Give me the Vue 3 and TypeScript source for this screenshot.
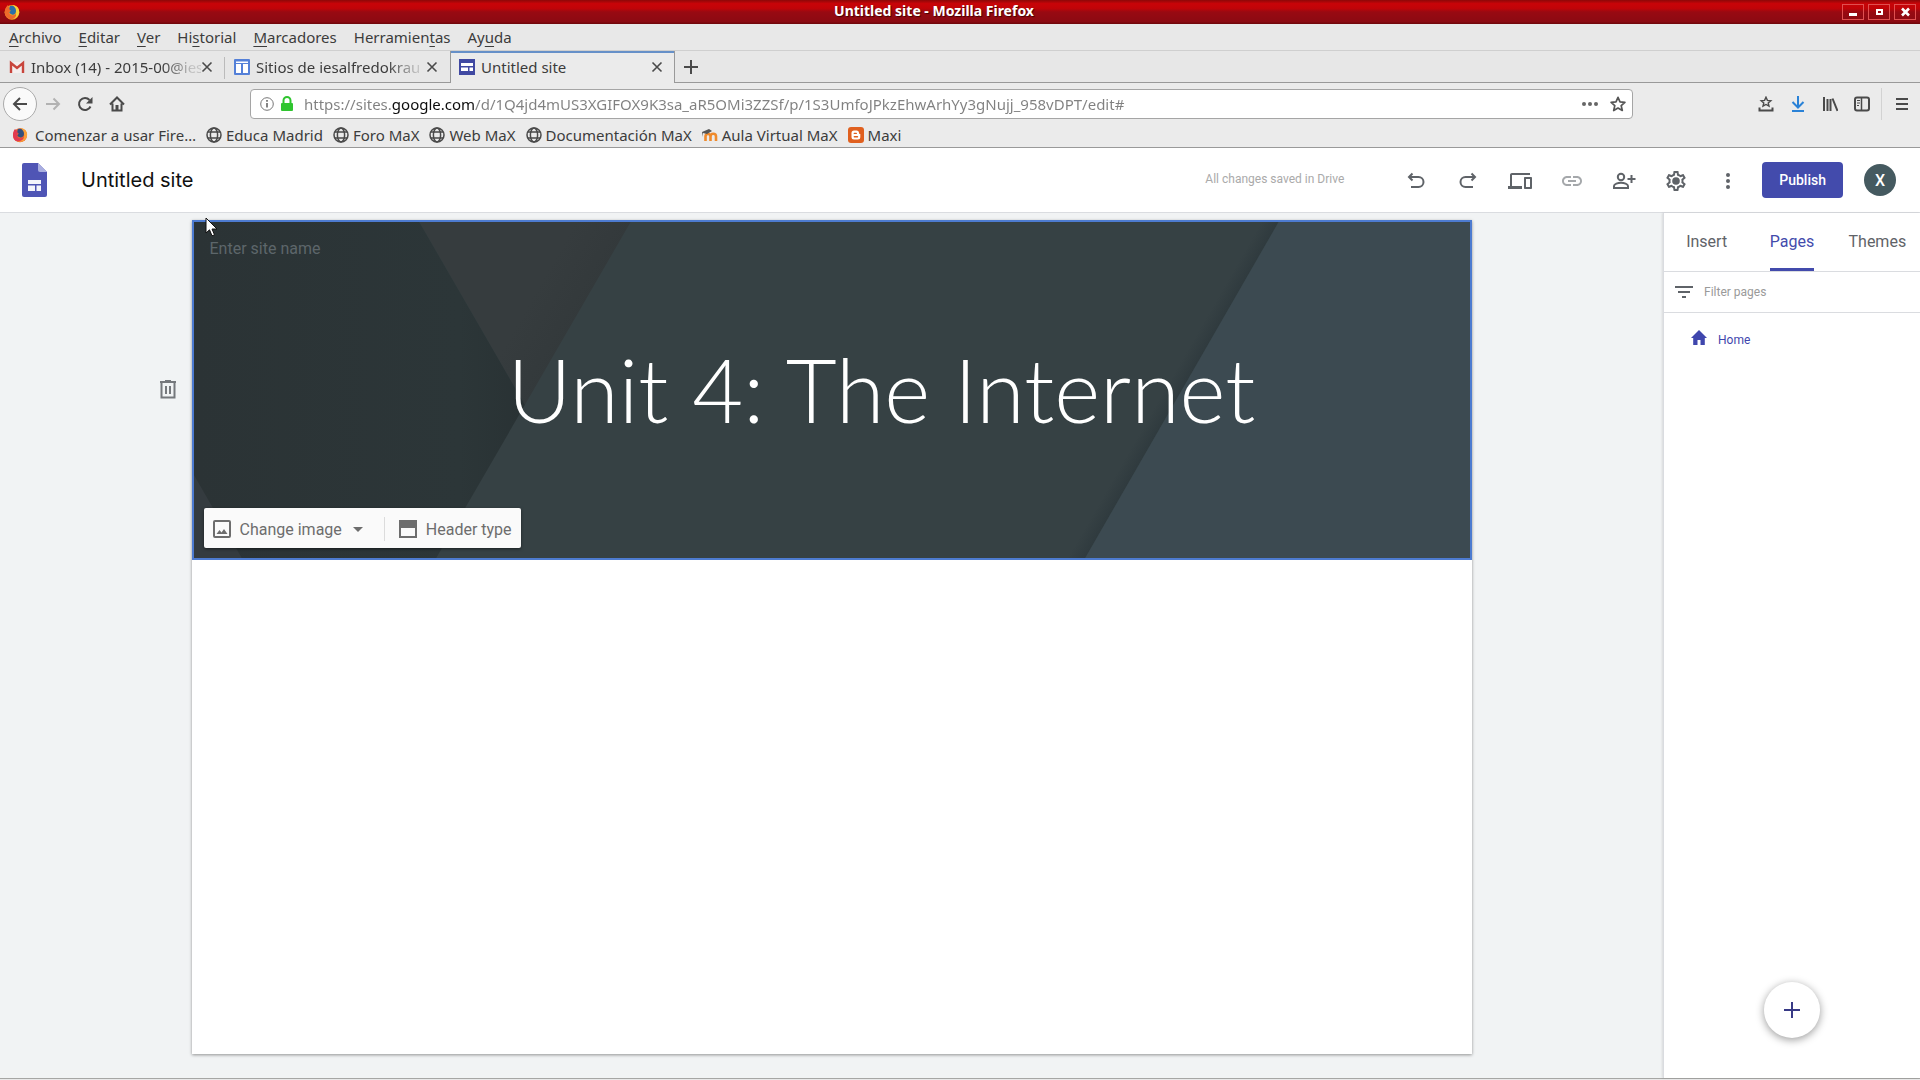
<script setup lang="ts">
import { ref } from 'vue'

interface MenuEntry { before: string; key: string; after: string }
interface Bookmark { label: string; icon: 'firefox' | 'globe' | 'moodle' | 'blogger' }

const menus: MenuEntry[] = [
  { before: '', key: 'A', after: 'rchivo' },
  { before: '', key: 'E', after: 'ditar' },
  { before: '', key: 'V', after: 'er' },
  { before: 'Hi', key: 's', after: 'torial' },
  { before: '', key: 'M', after: 'arcadores' },
  { before: 'Herramien', key: 't', after: 'as' },
  { before: 'Ay', key: 'u', after: 'da' },
]

const bookmarks: Bookmark[] = [
  { label: 'Comenzar a usar Fire…', icon: 'firefox' },
  { label: 'Educa Madrid', icon: 'globe' },
  { label: 'Foro MaX', icon: 'globe' },
  { label: 'Web MaX', icon: 'globe' },
  { label: 'Documentación MaX', icon: 'globe' },
  { label: 'Aula Virtual MaX', icon: 'moodle' },
  { label: 'Maxi', icon: 'blogger' },
]

const panels = ['Insert', 'Pages', 'Themes']
const activePanel = ref('Pages')
const address = ref('https://sites.google.com/d/1Q4jd4mUS3XGIFOX9K3sa_aR5OMi3ZZSf/p/1S3UmfoJPkzEhwArhYy3gNujj_958vDPT/edit#')
const siteTitle = ref('Untitled site')
const siteName = ref('')
const pageFilter = ref('')
</script>

<template>
  <div class="window">
    <header class="titlebar">
      <svg class="i16 title-logo" viewBox="0 0 16 16" aria-hidden="true">
        <circle cx="8" cy="8.300" r="7.400" fill="#f5a21c" />
        <path d="M8 1c5 0 8 4 7 8-1 5-6 7-10 5 5 0 8-3 7-7C11 4 10 3 8 1z" fill="#f9d13a" />
        <path d="M1 6C2 3 3 2 4 1c0 2 2 3 3 4L5 9c1 3 5 3 7 1 1 3-3 6-6 5C2 14 0 10 1 6z" fill="#ee6a2b" />
        <path d="M6 2c3-1 6 1 6 5 0 3-3 5-5 3C4 9 6 7 7 7 5 6 5 4 6 2z" fill="#2c6fa8" />
      </svg>
      <span class="window-title">Untitled site - Mozilla Firefox</span>
      <div class="window-buttons">
        <button aria-label="Minimizar"><svg viewBox="0 0 20 14"><path d="M6 9.500h8" stroke="#fff" stroke-width="3" /></svg></button>
        <button aria-label="Maximizar"><svg viewBox="0 0 20 14"><rect x="8" y="5" width="5" height="4" fill="none" stroke="#fff" stroke-width="2" /></svg></button>
        <button aria-label="Cerrar"><svg viewBox="0 0 20 14"><path d="M7 3.500l7 7m0-7l-7 7" stroke="#fff" stroke-width="2.600" /></svg></button>
      </div>
    </header>

    <nav class="menubar" aria-label="Menú">
      <button v-for="m in menus" :key="m.key"><span>{{ m.before }}<u>{{ m.key }}</u>{{ m.after }}</span></button>
    </nav>

    <div class="tabstrip" role="tablist">
      <div class="tab">
        <svg class="i16" viewBox="0 0 16 16" aria-hidden="true">
          <rect x="1" y="3" width="14" height="11" fill="#f4eeee" />
          <path d="M2 14V4l6 5 6-5v10" fill="none" stroke="#c8453c" stroke-width="2.400" />
        </svg>
        <button class="tab-label fade" role="tab">Inbox (14) - 2015-00@ies</button>
        <button class="close" aria-label="Cerrar pestaña"><svg viewBox="0 0 12 12"><path d="M1.500 1.500l9 9m0-9l-9 9" /></svg></button>
      </div>
      <div class="tab split">
        <svg class="i16" viewBox="0 0 16 16" aria-hidden="true">
          <rect width="16" height="16" rx="1" fill="#5480d8" />
          <path d="M2 5h5v9H2zM9 5h5v9H9zM2 2.500h12V4H2z" fill="#fff" />
        </svg>
        <button class="tab-label fade" role="tab">Sitios de iesalfredokrau</button>
        <button class="close" aria-label="Cerrar pestaña"><svg viewBox="0 0 12 12"><path d="M1.500 1.500l9 9m0-9l-9 9" /></svg></button>
      </div>
      <div class="tab active">
        <svg class="i16" viewBox="0 0 16 16" aria-hidden="true">
          <rect width="16" height="16" fill="#4049a2" />
          <path d="M2 4h12v3H2zM2 8.500h7V12H2zM10.500 8.500H14V12h-3.500z" fill="#fff" />
        </svg>
        <button class="tab-label" role="tab" aria-selected="true">Untitled site</button>
        <button class="close" aria-label="Cerrar pestaña"><svg viewBox="0 0 12 12"><path d="M1.500 1.500l9 9m0-9l-9 9" /></svg></button>
      </div>
      <button class="new-tab" aria-label="Nueva pestaña"><svg viewBox="0 0 16 16"><path d="M8 1v14M1 8h14" /></svg></button>
    </div>

    <div class="navbar">
      <div class="nav-buttons">
        <button class="back" aria-label="Atrás"><svg class="i16 line" viewBox="0 0 16 16"><path d="M15 8H2M8 2L2 8l6 6" /></svg></button>
        <button class="dim" aria-label="Adelante"><svg class="i16 line" viewBox="0 0 16 16"><path d="M1 8h13M8.500 2.500L14 8l-5.500 5.500" /></svg></button>
        <button aria-label="Recargar"><svg class="i16 line" viewBox="0 0 16 16"><path d="M13.500 10.500A6 6 0 1 1 12.500 4" /><path d="M15.500 1v6.500H9z" fill="#4a4a4a" stroke="none" /></svg></button>
        <button aria-label="Inicio"><svg class="i16 line" viewBox="0 0 16 16"><path d="M1 8.500L8 1.500l7 7M3.500 7.500V14.500h9V7.500" /><path d="M6.500 9h3v5h-3z" fill="#4a4a4a" stroke="none" /></svg></button>
      </div>
      <div class="urlbar">
        <svg class="info" viewBox="0 0 14 14" aria-hidden="true"><circle cx="7" cy="7" r="6.300" fill="none" stroke="#777" /><path d="M7 6v4.500M7 3v1.700" stroke="#666" stroke-width="1.600" /></svg>
        <svg class="lock" viewBox="0 0 14 16" aria-hidden="true"><path d="M3.500 8V4.500a3.500 3.500 0 0 1 7 0V8" fill="none" stroke="#2fc52f" stroke-width="2" /><rect x="1" y="7" width="12" height="8" rx="1" fill="#2fc52f" /></svg>
        <input v-model="address" class="address" type="text" aria-label="Dirección" spellcheck="false">
        <button aria-label="Acciones de página"><svg class="i16" viewBox="0 0 16 16" fill="#666"><circle cx="2" cy="8" r="2" /><circle cx="8" cy="8" r="2" /><circle cx="14" cy="8" r="2" /></svg></button>
        <button aria-label="Añadir marcador"><svg class="i16" viewBox="0 0 16 16"><path d="M8 1.300l2 4.500 4.900.5-3.700 3.300 1.100 4.900L8 12l-4.300 2.500 1.100-4.900L1.100 6.300 6 5.800z" fill="none" stroke="#555" stroke-width="1.700" stroke-linejoin="round" /></svg></button>
      </div>
      <div class="nav-tools">
        <button aria-label="Mostrar marcadores"><svg class="i16" viewBox="0 0 16 16" fill="none" stroke="#4a4a4a"><path d="M8 1.200l1.400 3.200 3.400.3-2.600 2.200.8 3.300L8 8.500l-3 1.700.8-3.300-2.600-2.200 3.400-.3z" stroke-width="1.400" /><path d="M1.500 11.500v3h13v-3" stroke-width="2" /></svg></button>
        <button aria-label="Descargas"><svg class="i16" viewBox="0 0 16 16" fill="none" stroke="#2a82d7" stroke-width="2"><path d="M8 0v11M2.500 6L8 11.500 13.500 6M2 15h12" /></svg></button>
        <button aria-label="Catálogo"><svg class="i16" viewBox="0 0 16 16" fill="none" stroke="#4a4a4a" stroke-width="2"><path d="M2 1v14M5.500 3v12M8.500 3v12M10.500 2.500L15.500 15" /></svg></button>
        <button aria-label="Barra lateral"><svg class="i16" viewBox="0 0 16 16" fill="none" stroke="#4a4a4a"><rect x="1" y="1.500" width="14" height="13" rx="2" stroke-width="2" /><path d="M7.500 2v12" stroke-width="1.500" /><path d="M3 4.500h3M3 7h3M3 9.500h2" /></svg></button>
        <button class="app-menu" aria-label="Abrir menú"><svg class="i16" viewBox="0 0 16 16"><path d="M2 3h12M2 8h12M2 13h12" stroke="#4a4a4a" stroke-width="2" /></svg></button>
      </div>
    </div>

    <nav class="bookmarks" aria-label="Marcadores">
      <a v-for="b in bookmarks" :key="b.label" href="#" :class="b.icon">
        <svg v-if="b.icon === 'globe'" class="i16" viewBox="0 0 16 16" fill="none" stroke="#4a4a4a" stroke-width="1.500" aria-hidden="true"><circle cx="8" cy="8" r="7" /><ellipse cx="8" cy="8" rx="3.600" ry="7" /><path d="M2 5h12M2 11h12" /></svg>
        <svg v-else-if="b.icon === 'firefox'" class="i16" viewBox="0 0 16 16" aria-hidden="true"><circle cx="8" cy="8.300" r="7" fill="#f0652b" /><path d="M8 1c5 0 8 4 7 8-1 5-6 7-10 5 5 0 8-3 7-7C11 4 10 3 8 1z" fill="#f9a13a" /><path d="M1 8c0-3 1-5 2-6l3 3-1 4c1 3 5 3 7 1-1 4-5 5-8 4-2-1-3-3-3-6z" fill="#e23a50" /><path d="M6 2c3-1 6 1 6 5 0 3-3 4-5 3-3-1-1-3 0-3-2-1-2-3-1-5z" fill="#33507e" /></svg>
        <svg v-else-if="b.icon === 'moodle'" class="i16" viewBox="0 0 16 16" aria-hidden="true"><path d="M3.500 14V9.500a2.500 2.500 0 0 1 5 0V14M8.500 9.500a2.500 2.500 0 0 1 5.500 0V14" fill="none" stroke="#ef8a2c" stroke-width="2.600" /><path d="M0 5l7-3 3 2-5 3-4-1v4z" fill="#555" /></svg>
        <svg v-else class="i16" viewBox="0 0 16 16" aria-hidden="true"><rect width="16" height="16" rx="3" fill="#e0601f" /><path d="M6 3.500h2.500a2.500 2.500 0 0 1 2.500 2.500c0 .7.500 1 1.300 1V10a2.500 2.500 0 0 1-2.500 2.500H6A2.500 2.500 0 0 1 3.500 10V6A2.500 2.500 0 0 1 6 3.500z" fill="#fff" /><path d="M6.300 6.400h2M6.300 9.700h3.200" stroke="#e0601f" stroke-width="1.400" stroke-linecap="round" /></svg>
        <span>{{ b.label }}</span>
      </a>
    </nav>

    <header class="appbar">
      <svg class="sites-logo" viewBox="0 0 25 34" aria-hidden="true">
        <path d="M2 0h14l9 9v23a2 2 0 0 1-2 2H2a2 2 0 0 1-2-2V2a2 2 0 0 1 2-2z" fill="#4f55b5" />
        <path d="M16 0l9 9h-7a2 2 0 0 1-2-2z" fill="#a9aee0" />
        <path d="M6 17h13v4H6zM6 22.500h7V28H6zM14.500 22.500H19V28h-4.500z" fill="#f4f4fb" />
      </svg>
      <input v-model="siteTitle" class="site-title" type="text" aria-label="Site document name">
      <span class="save-state">All changes saved in Drive</span>
      <div class="actions">
        <button aria-label="Undo"><svg class="i24" viewBox="0 0 24 24" fill="none" stroke="#5f6368" stroke-width="2"><path d="M8.500 4.500L5 8l3.500 3.500M5 8h9.500a4.500 4.500 0 0 1 0 10H7" /></svg></button>
        <button aria-label="Redo"><svg class="i24" viewBox="0 0 24 24" fill="none" stroke="#5f6368" stroke-width="2"><path d="M15.500 4.500L19 8l-3.500 3.500M19 8H9.500a4.500 4.500 0 0 0 0 10H17" /></svg></button>
        <button aria-label="Preview"><svg class="i24" viewBox="0 0 24 24" fill="#5f6368"><path d="M4 6h18V4H4c-1.100 0-2 .9-2 2v11H0v3h14v-3H4V6zm19 2h-6c-.55 0-1 .45-1 1v10c0 .55.450 1 1 1h6c.55 0 1-.45 1-1V9c0-.55-.45-1-1-1zm-1 10h-4v-8h4v8z" /></svg></button>
        <button aria-label="Copy published site link"><svg class="i24" viewBox="0 0 24 24" fill="#a5a8ab"><path d="M3.900 12c0-1.710 1.390-3.100 3.100-3.100h4V7H7c-2.760 0-5 2.240-5 5s2.240 5 5 5h4v-1.900H7c-1.710 0-3.100-1.390-3.100-3.100zM8 13h8v-2H8v2zm9-6h-4v1.900h4c1.710 0 3.100 1.390 3.100 3.100s-1.390 3.100-3.100 3.100h-4V17h4c2.760 0 5-2.240 5-5s-2.240-5-5-5z" /></svg></button>
        <button aria-label="Share with others"><svg class="i24" viewBox="0 0 24 24" fill="none" stroke="#5f6368" stroke-width="2"><circle cx="9" cy="8" r="3.200" /><path d="M2 19v-2c0-2 4-3.300 7-3.300s7 1.300 7 3.300v2zM19.500 6v8M15.500 10h8" /></svg></button>
        <button aria-label="Settings"><svg class="i24" viewBox="0 0 24 24" fill="#5f6368"><path d="M19.430 12.980c.04-.32.070-.64.070-.98s-.03-.66-.07-.98l2.110-1.650c.19-.15.240-.42.120-.64l-2-3.460c-.09-.16-.26-.25-.44-.25-.06 0-.12.010-.17.030l-2.490 1c-.52-.4-1.080-.73-1.690-.98l-.38-2.650C14.460 2.180 14.250 2 14 2h-4c-.25 0-.46.180-.49.420l-.38 2.650c-.61.250-1.170.590-1.690.980l-2.490-1c-.06-.02-.12-.03-.18-.03-.17 0-.34.090-.43.250l-2 3.460c-.13.220-.07.490.120.640l2.110 1.650c-.04.320-.07.650-.07.980s.03.660.070.980l-2.110 1.650c-.19.150-.24.420-.12.640l2 3.460c.09.160.260.250.440.250.06 0 .12-.01.170-.03l2.490-1c.52.400 1.080.730 1.690.980l.38 2.650c.03.240.240.420.490.420h4c.25 0 .46-.18.490-.42l.38-2.650c.61-.25 1.170-.59 1.690-.98l2.490 1c.06.020.120.030.180.030.17 0 .34-.09.430-.25l2-3.460c.12-.22.070-.49-.12-.64l-2.110-1.650zm-1.980-1.710c.04.310.050.520.050.730s-.02.430-.05.730l-.14 1.130.89.700 1.080.840-.7 1.210-1.270-.51-1.040-.42-.9.680c-.43.320-.84.560-1.250.730l-1.060.430-.16 1.130-.2 1.350h-1.400l-.19-1.350-.16-1.130-1.060-.43c-.43-.18-.83-.41-1.230-.71l-.91-.7-1.060.430-1.270.510-.7-1.210 1.080-.84.890-.7-.14-1.130c-.03-.31-.05-.54-.05-.74s.02-.43.050-.73l.14-1.130-.89-.7-1.080-.84.7-1.210 1.270.510 1.040.420.900-.68c.43-.32.840-.56 1.250-.73l1.060-.43.160-1.130.2-1.350h1.390l.19 1.350.16 1.130 1.060.430c.43.180.830.410 1.230.710l.91.700 1.060-.43 1.270-.51.700 1.210-1.070.850-.89.700.14 1.130z" /><circle cx="12" cy="12" r="3.800" /></svg></button>
        <button aria-label="More"><svg class="i24" viewBox="0 0 24 24" fill="#5f6368"><circle cx="12" cy="6" r="2" /><circle cx="12" cy="12" r="2" /><circle cx="12" cy="18" r="2" /></svg></button>
      </div>
      <button class="publish">Publish</button>
      <button class="avatar" aria-label="Account">X</button>
    </header>

    <div class="workspace">
      <main class="stage">
        <button class="trash" aria-label="Delete section"><svg class="i24" viewBox="0 0 24 24" fill="none" stroke="#75787c" stroke-width="2"><path d="M5.500 5v14.500h13V5M4 4h16M9 3h6M10 8v8M14 8v8" /></svg></button>
        <article class="page">
          <section class="hero">
            <svg class="backdrop" viewBox="0 0 1280 340" preserveAspectRatio="none" aria-hidden="true">
              <defs>
                <linearGradient id="edge" gradientUnits="userSpaceOnUse" x1="977" y1="164" x2="991" y2="172"><stop offset="0" stop-color="#364144" /><stop offset="1" stop-color="#2f3a3e" /></linearGradient>
                <linearGradient id="wedge" gradientUnits="userSpaceOnUse" x1="340" y1="75" x2="388" y2="102"><stop offset="0" stop-color="#363c3e" /><stop offset="1" stop-color="#33393b" /></linearGradient>
                <linearGradient id="dark" x1="0" y1="0" x2="1" y2="0"><stop offset="0" stop-color="#2b3335" /><stop offset=".8" stop-color="#2c3638" /><stop offset="1" stop-color="#293234" /></linearGradient>
              </defs>
              <rect width="1280" height="340" fill="#364144" />
              <path d="M1020 0h68L894 340h-68z" fill="url(#edge)" />
              <path d="M1088 0h192v340H894z" fill="#3c4a51" />
              <path d="M226 0h212L332 185z" fill="url(#wedge)" />
              <path d="M0 0h226l106 185-89 155H0z" fill="url(#dark)" />
              <path d="M0 256l48 84H0z" fill="#343b3f" />
            </svg>
            <input v-model="siteName" class="site-name" type="text" placeholder="Enter site name" aria-label="Enter site name">
            <h1>Unit 4: The Internet</h1>
            <div class="hero-tools">
              <button>
                <svg class="i24" viewBox="0 0 24 24" fill="none" stroke="#6d6d6d" stroke-width="2"><rect x="4" y="4" width="16" height="16" rx="1" /><path d="M6.500 17l3-4 2 2.500 2.500-3.500 3.500 5z" fill="#6d6d6d" stroke="none" /></svg>
                <span>Change image</span>
                <svg class="caret" viewBox="0 0 10 5"><path d="M0 0h10L5 5z" fill="#6d6d6d" /></svg>
              </button>
              <button class="header-type">
                <svg class="i24" viewBox="0 0 24 24" fill="none" stroke="#6d6d6d" stroke-width="2"><path d="M4 4h16v16H4z" /><path d="M4 4h16v6H4z" fill="#6d6d6d" /></svg>
                <span>Header type</span>
              </button>
            </div>
          </section>
        </article>
        <svg class="pointer" viewBox="0 0 14 20" aria-hidden="true"><path d="M1 1v15l3.500-3.200 2.500 6 2.500-1-2.500-5.800h5z" fill="#fff" stroke="#111" /></svg>
      </main>

      <aside class="sidebar">
        <div class="panel-tabs" role="tablist">
          <button v-for="p in panels" :key="p" role="tab" :aria-selected="p === activePanel" :class="{ on: p === activePanel }" @click="activePanel = p"><span>{{ p }}</span></button>
        </div>
        <label class="filter">
          <svg class="i24" viewBox="0 0 24 24" aria-hidden="true"><path d="M3 7h18M6 12h12M10 17h4" stroke="#5f6368" stroke-width="2" /></svg>
          <input v-model="pageFilter" type="text" placeholder="Filter pages" aria-label="Filter pages">
        </label>
        <a class="page-link" href="#">
          <svg class="i16" viewBox="0 0 16 16" aria-hidden="true"><path d="M8 0l8 8h-2.200v7H9.500v-5h-3v5H2.200V8H0z" fill="#3f46ad" /></svg>
          <span>Home</span>
        </a>
        <button class="fab" aria-label="New page"><svg class="i16" viewBox="0 0 16 16"><path d="M8 0v16M0 8h16" stroke="#383a86" stroke-width="2" /></svg></button>
      </aside>
    </div>
  </div>
</template>

<style>
body {
  margin: 0;
}
</style>

<style scoped>
.window {
  min-height: 100vh;
  box-sizing: border-box;
  display: flex;
  flex-direction: column;
  padding-bottom: 1px;
  background: #e8e8e8;
  font-family: "Noto Sans", "Open Sans", sans-serif;
  font-size: 15px;
  color: #3c3c3c;
}

button,
input {
  border: 0;
  padding: 0;
  margin: 0;
  background: none;
  font: inherit;
  color: inherit;
  min-width: 0;
  outline: none;
}

button {
  display: flex;
  align-items: center;
  white-space: nowrap;
}

a {
  color: inherit;
  text-decoration: none;
}

svg {
  display: block;
  flex: none;
}

.i16 {
  width: 16px;
  height: 16px;
}

.i24 {
  width: 24px;
  height: 24px;
}

.line {
  fill: none;
  stroke: #4a4a4a;
  stroke-width: 2;
}

/* Browser chrome */
.titlebar {
  display: grid;
  grid-template-columns: 76px 1fr 76px;
  align-items: center;
  height: 24px;
  padding: 0 2px 0 4px;
  background: linear-gradient(#8c0808, #c80408 15%, #c00408 35%, #980a12 50%, #8c0a12 90%, #6c060a);
  box-sizing: border-box;
}

.window-title {
  justify-self: center;
  color: #fff;
  font-size: 14px;
  line-height: 20px;
  font-weight: 700;
  text-shadow: 1px 1px 1px #400;
  padding: 0 54px 2px 0;
}

.window-buttons {
  display: flex;
  gap: 4px;
}

.window-buttons button {
  width: 22px;
  height: 16px;
  box-sizing: border-box;
  border: 1px solid #e05050;
}

.window-buttons svg {
  width: 20px;
  height: 14px;
}

.menubar {
  display: flex;
  gap: 17px;
  height: 26px;
  padding: 0 9px;
  border-bottom: 1px solid #cfcfcf;
  background: #e8e8e8;
}

u {
  text-underline-offset: 3px;
}

.tabstrip {
  display: flex;
  height: 32px;
  background: #e7e7e7;
  box-shadow: inset 0 -1px #999;
}

.tab {
  display: flex;
  align-items: center;
  box-sizing: border-box;
  width: 225px;
  padding: 0 12px 0 9px;
}

.split {
  box-shadow: -1px 0 #bbb;
  clip-path: inset(6px 0 4px -1px);
}

.active {
  background: #ebebeb;
  border: solid #999;
  border-width: 0 1px;
  padding: 0 11px 0 8px;
  box-shadow: inset 0 2px #6690c8;
}

.tab-label {
  flex: 1;
  padding-left: 6px;
}

.fade {
  -webkit-mask-image: linear-gradient(90deg, #000 78%, rgba(0, 0, 0, .2) 95%);
  mask-image: linear-gradient(90deg, #000 78%, rgba(0, 0, 0, .2) 95%);
}

.close svg {
  width: 12px;
  height: 12px;
  fill: none;
  stroke: #4a4a4a;
  stroke-width: 1.600;
}

.new-tab {
  padding: 0 8px;
}

.new-tab svg {
  width: 16px;
  height: 16px;
  stroke: #4a4a4a;
  stroke-width: 2;
}

.navbar {
  display: flex;
  align-items: center;
  height: 41px;
  padding-top: 1px;
  box-sizing: border-box;
  background: #ebebeb;
}

.nav-buttons {
  display: flex;
  align-items: center;
  width: 250px;
  padding-left: 3px;
  box-sizing: border-box;
}

.nav-buttons button {
  justify-content: center;
  width: 32px;
  height: 34px;
}

.nav-buttons .back {
  width: 34px;
  border-radius: 50%;
  border: 1px solid #aaa;
  background: #fafafa;
  box-sizing: border-box;
}

.dim {
  opacity: .35;
}

.urlbar {
  display: flex;
  align-items: center;
  flex: 1;
  height: 30px;
  box-sizing: border-box;
  padding: 0 6px 0 9px;
  gap: 12px;
  border: 1px solid #a5a5a5;
  border-radius: 4px;
  background: #fff;
}

.info {
  width: 14px;
  height: 14px;
}

.lock {
  width: 14px;
  height: 16px;
  margin: 0 -2px 0 -6px;
}

.address {
  flex: 1;
  background: linear-gradient(90deg, #808080 88px, #0c0c0c 88px 170px, #808080 170px);
  -webkit-background-clip: text;
  background-clip: text;
  color: #808080;
  -webkit-text-fill-color: transparent;
}

.nav-tools {
  display: flex;
  align-items: center;
  justify-content: flex-end;
  gap: 16px;
  width: 287px;
  padding-right: 10px;
  box-sizing: border-box;
}

.app-menu {
  height: 32px;
  padding-left: 12px;
  margin-left: -5px;
  border-left: 1px solid #d2d2d2;
}

.bookmarks {
  display: flex;
  gap: 10px;
  height: 23px;
  padding: 0 12px;
  border-bottom: 1px solid #999;
  background: #ebebeb;
  line-height: 20px;
}

.bookmarks a {
  display: flex;
  align-items: center;
  gap: 4px;
  padding-bottom: 1px;
  white-space: nowrap;
}

.bookmarks .firefox {
  gap: 7px;
}

/* Sites editor */
.appbar {
  display: flex;
  align-items: center;
  height: 64px;
  padding: 0 24px 0 22px;
  border-bottom: 1px solid #dadce0;
  background: #fff;
  font-family: Roboto, sans-serif;
  color: #5f6368;
}

.sites-logo {
  width: 25px;
  height: 34px;
}

.site-title {
  flex: 1;
  padding-left: 34px;
  color: #111;
  font-family: Inter, Roboto, sans-serif;
  font-size: 20px;
}

.save-state {
  margin-right: 60px;
  padding-bottom: 2px;
  color: #aaa;
  font-size: 12px;
}

.actions {
  display: flex;
  gap: 28px;
  margin-right: 22px;
  padding-top: 2px;
}

.publish {
  height: 36px;
  padding: 0 17px;
  border-radius: 4px;
  background: #434bac;
  color: #fff;
  font-size: 14px;
  font-weight: 500;
}

.avatar {
  justify-content: center;
  width: 32px;
  height: 32px;
  margin-left: 21px;
  border-radius: 50%;
  background: #455a60;
  color: #fff;
  font-size: 16px;
  font-weight: 500;
}

.workspace {
  flex: 1;
  display: flex;
  border-bottom: 1px solid #a6a6a4;
  font-family: Roboto, sans-serif;
}

.stage {
  position: relative;
  flex: 1;
  display: grid;
  grid-template-columns: minmax(40px, 1fr) minmax(0, 1280px) minmax(40px, 1fr);
  padding: 7px 0 24px;
  background: #f1f3f4;
}

.trash {
  justify-self: end;
  align-self: start;
  height: 340px;
  padding-right: 12px;
}

.page {
  background: #fff;
  box-shadow: 0 1px 3px rgba(0, 0, 0, .4);
}

.hero {
  position: relative;
  display: flex;
  flex-direction: column;
  align-items: flex-start;
  justify-content: space-between;
  min-height: 340px;
  box-sizing: border-box;
  padding: 14px 10px 10px;
  border: 2px solid #4d7bd0;
}

.backdrop {
  position: absolute;
  inset: 0;
  width: 100%;
  height: 100%;
}

.site-name,
h1,
.hero-tools {
  position: relative;
}

.site-name {
  height: 24px;
  padding-left: 6px;
  color: #5d666a;
  font-size: 16px;
}

.site-name::placeholder {
  color: #5d666a;
  opacity: 1;
}

h1 {
  align-self: stretch;
  margin: 0;
  padding: 10px 0 0 100px;
  text-align: center;
  color: #fff;
  font-family: Lato, sans-serif;
  font-size: 88px;
  font-weight: 300;
  line-height: 104px;
}

.hero-tools {
  display: flex;
  align-items: center;
  height: 40px;
  padding: 2px 9px 0 6px;
  box-sizing: border-box;
  border-radius: 2px;
  background: #fafafa;
  color: #6d6d6d;
  font-size: 16px;
  box-shadow: 0 1px 3px rgba(0, 0, 0, .5);
}

.hero-tools button {
  gap: 6px;
}

.caret {
  width: 10px;
  height: 5px;
  margin: 0 21px 0 5px;
}

.hero-tools .header-type {
  height: 24px;
  padding-left: 11px;
  border-left: 1px solid #dcdcdc;
}

.pointer {
  position: absolute;
  left: 205px;
  top: 4px;
  width: 14px;
  height: 20px;
}

.sidebar {
  display: flex;
  flex-direction: column;
  width: 257px;
  box-sizing: border-box;
  border-left: 1px solid #dadce0;
  background: #fff;
  box-shadow: -1px 0 2px rgba(0, 0, 0, .1);
  position: relative;
}

.panel-tabs {
  display: grid;
  grid-template-columns: repeat(3, 1fr);
  height: 58px;
  border-bottom: 1px solid #dadce0;
  color: #5f6368;
  font-size: 16px;
}

.panel-tabs button {
  justify-content: center;
}

.panel-tabs span {
  display: flex;
  align-items: center;
  height: 100%;
  box-sizing: border-box;
  padding-top: 2px;
  border-bottom: 3px solid transparent;
}

.panel-tabs .on span {
  border-color: #434bac;
  color: #434bac;
}

.filter {
  display: flex;
  align-items: center;
  gap: 8px;
  height: 40px;
  padding-left: 8px;
  border-bottom: 1px solid #dadce0;
}

.filter input {
  flex: 1;
  font-size: 12px;
}

.filter input::placeholder {
  color: #9a9a9a;
  opacity: 1;
}

.page-link {
  display: flex;
  align-items: center;
  gap: 11px;
  height: 50px;
  padding-left: 27px;
  color: #3f46ad;
  font-size: 12px;
}

.page-link span {
  padding-top: 4px;
}

.fab {
  justify-content: center;
  align-self: center;
  width: 56px;
  height: 56px;
  margin: auto auto 40px;
  border-radius: 50%;
  background: #fff;
  box-shadow: 0 2px 8px rgba(0, 0, 0, .4);
}
</style>
